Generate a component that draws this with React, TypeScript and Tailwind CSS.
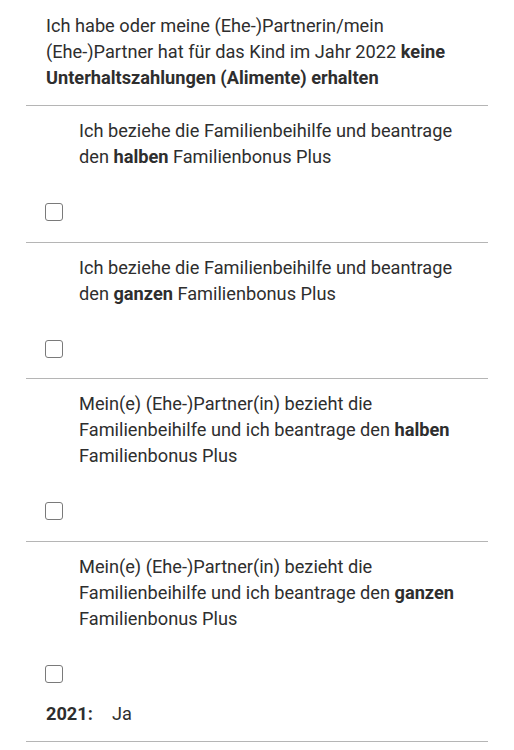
import React from "react";

const options: React.ReactNode[] = [
  <>Ich beziehe die Familienbeihilfe und beantrage den <b className="font-bold">halben</b> Familienbonus Plus</>,
  <>Ich beziehe die Familienbeihilfe und beantrage den <b className="font-bold">ganzen</b> Familienbonus Plus</>,
  <>Mein(e) (Ehe-)Partner(in) bezieht die Familienbeihilfe und ich beantrage den <b className="font-bold">halben</b> Familienbonus Plus</>,
  <>Mein(e) (Ehe-)Partner(in) bezieht die Familienbeihilfe und ich beantrage den <b className="font-bold">ganzen</b> Familienbonus Plus</>,
];

function Checkbox() {
  return <div className="w-[18px] h-[18px] rounded-[3px] border-[1.5px] border-[#7a7a7a] bg-white" />;
}

export default function App() {
  return (
    <div className="w-[514px] min-h-[750px] bg-white text-[18.2px] leading-[26px] text-[#2e2e2e]" style={{ fontFamily: "Roboto, 'Noto Sans', sans-serif" }}>
      <div className="pl-[46px] pr-[30px] pt-[13px] pb-[14px]">
        Ich habe oder meine (Ehe-)Partnerin/mein (Ehe-)Partner hat für das Kind im Jahr 2022{" "}
        <b className="font-bold">keine Unterhaltszahlungen (Alimente) erhalten</b>
      </div>
      <div className="mx-[26px] border-t border-[#b5b5b5]">
        {options.map((o, i) => (
          <div key={i} className={i > 0 ? "border-t border-[#b5b5b5]" : ""}>
            <div className="pt-[12px] pl-[53px] pr-[20px]">{o}</div>
            <div className="pt-[33px] pb-[20.6px] pl-[19px]">
              <Checkbox />
            </div>
          </div>
        ))}
        <div className="pl-[20px] flex gap-[19px] pb-[14px] -mt-[2px]">
          <b className="font-bold">2021:</b>
          <span>Ja</span>
        </div>
        <div className="border-t border-[#b5b5b5]" />
      </div>
    </div>
  );
}
